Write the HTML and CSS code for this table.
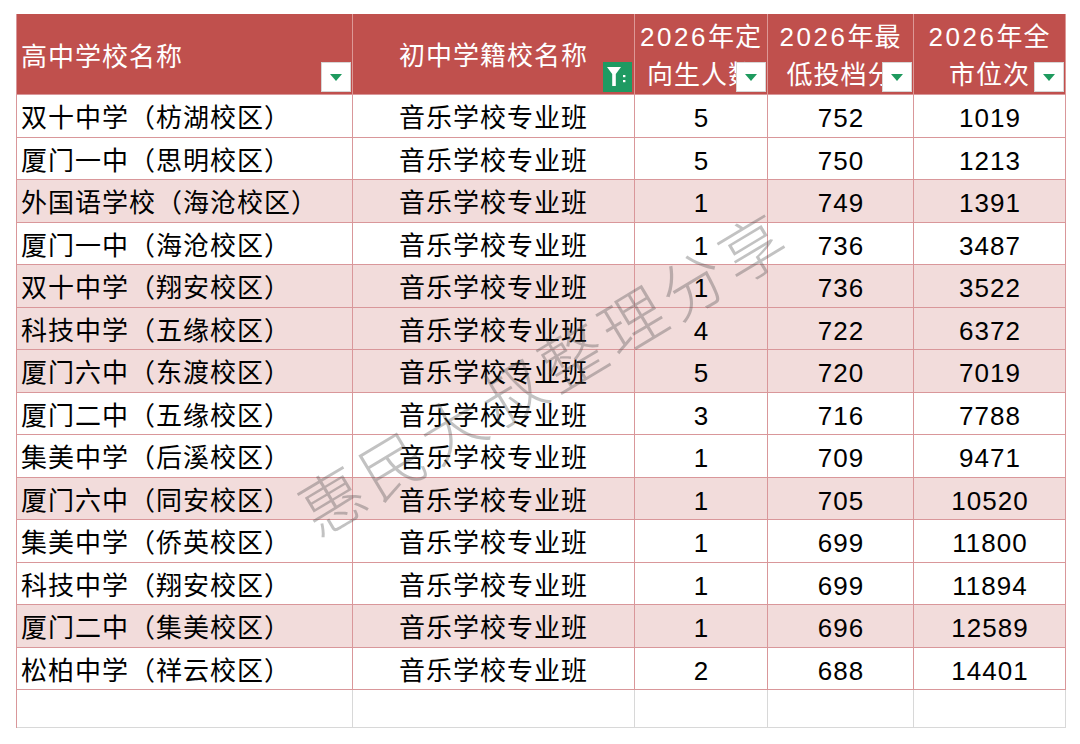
FILE: index.html
```html
<!DOCTYPE html>
<html lang="zh-CN">
<head>
<meta charset="utf-8">
<title>音乐学校专业班</title>
<link rel="stylesheet" href="styles.css">
</head>
<body>
<div class="page">
  <div class="sheet">
    <div class="hc left"><span>高中学校名称</span><i class="fbtn"><b></b></i></div>
    <div class="hc center"><span>初中学籍校名称</span>
      <svg class="factive" viewBox="0 0 29 30" width="29" height="30"><rect width="29" height="30" fill="#1e9a62"/><path d="M4 5 H18 L12.8 12 V24 H9.2 V12 Z" fill="#fff"/><rect x="20" y="13" width="2.4" height="2.2" fill="#fff"/><rect x="20" y="18" width="2.4" height="2.2" fill="#fff"/></svg>
    </div>
    <div class="hc two"><span><em>2026</em>年定<br>向生人数</span><i class="fbtn"><b></b></i></div>
    <div class="hc two"><span><em>2026</em>年最<br>低投档分</span><i class="fbtn"><b></b></i></div>
    <div class="hc two"><span><em>2026</em>年全<br>市位次</span><i class="fbtn"><b></b></i></div>

    <div class="c l">双十中学（枋湖校区）</div><div class="c m">音乐学校专业班</div><div class="c n">5</div><div class="c n">752</div><div class="c n">1019</div>
    <div class="c l">厦门一中（思明校区）</div><div class="c m">音乐学校专业班</div><div class="c n">5</div><div class="c n">750</div><div class="c n">1213</div>
    <div class="c l p">外国语学校（海沧校区）</div><div class="c m p">音乐学校专业班</div><div class="c n p">1</div><div class="c n p">749</div><div class="c n p">1391</div>
    <div class="c l">厦门一中（海沧校区）</div><div class="c m">音乐学校专业班</div><div class="c n">1</div><div class="c n">736</div><div class="c n">3487</div>
    <div class="c l p">双十中学（翔安校区）</div><div class="c m p">音乐学校专业班</div><div class="c n p">1</div><div class="c n p">736</div><div class="c n p">3522</div>
    <div class="c l p">科技中学（五缘校区）</div><div class="c m p">音乐学校专业班</div><div class="c n p">4</div><div class="c n p">722</div><div class="c n p">6372</div>
    <div class="c l p">厦门六中（东渡校区）</div><div class="c m p">音乐学校专业班</div><div class="c n p">5</div><div class="c n p">720</div><div class="c n p">7019</div>
    <div class="c l">厦门二中（五缘校区）</div><div class="c m">音乐学校专业班</div><div class="c n">3</div><div class="c n">716</div><div class="c n">7788</div>
    <div class="c l">集美中学（后溪校区）</div><div class="c m">音乐学校专业班</div><div class="c n">1</div><div class="c n">709</div><div class="c n">9471</div>
    <div class="c l p">厦门六中（同安校区）</div><div class="c m p">音乐学校专业班</div><div class="c n p">1</div><div class="c n p">705</div><div class="c n p">10520</div>
    <div class="c l">集美中学（侨英校区）</div><div class="c m">音乐学校专业班</div><div class="c n">1</div><div class="c n">699</div><div class="c n">11800</div>
    <div class="c l">科技中学（翔安校区）</div><div class="c m">音乐学校专业班</div><div class="c n">1</div><div class="c n">699</div><div class="c n">11894</div>
    <div class="c l p">厦门二中（集美校区）</div><div class="c m p">音乐学校专业班</div><div class="c n p">1</div><div class="c n p">696</div><div class="c n p">12589</div>
    <div class="c l">松柏中学（祥云校区）</div><div class="c m">音乐学校专业班</div><div class="c n">2</div><div class="c n">688</div><div class="c n">14401</div>

    <div class="e"></div><div class="e"></div><div class="e"></div><div class="e"></div><div class="e"></div>
  </div>
  <div class="watermark">惠民大叔整理分享</div>
</div>
</body>
</html>
```

FILE: styles.css
```css
html, body {
  margin: 0;
  padding: 0;
  background: #ffffff;
}

.page {
  position: relative;
  width: 1080px;
  height: 744px;
  overflow: hidden;
  padding: 14px 0 0 16px;
  box-sizing: border-box;
  font-family: "Liberation Sans", "Noto Sans CJK SC", sans-serif;
}

.sheet {
  display: grid;
  grid-template-columns: 336px 282px 133px 146px 152px;
  grid-template-rows: 81px repeat(14, 42.5px) 38px;
  width: 1049px;
  border-left: 1px solid #d9979a;
  box-sizing: border-box;
}

.hc {
  position: relative;
  background: #c0504d;
  color: #ffffff;
  font-size: 26px;
  letter-spacing: 1px;
  border-right: 1px solid #dd9896;
  border-bottom: 1px solid #d9979a;
  display: flex;
  align-items: center;
  box-sizing: border-box;
}

.hc em {
  font-style: normal;
  letter-spacing: 2.5px;
}

.hc.left {
  padding-left: 4px;
}

.hc.center {
  justify-content: center;
  padding-bottom: 2px;
}

.hc.two {
  justify-content: center;
  text-align: center;
  line-height: 38px;
  padding-top: 3px;
}

.hc:last-of-type {
  border-right-color: #d9979a;
}

.fbtn {
  position: absolute;
  right: 1px;
  bottom: 2px;
  width: 30px;
  height: 30px;
  box-sizing: border-box;
  background: #ffffff;
  border: 1px solid #d6d6d6;
  display: flex;
  align-items: center;
  justify-content: center;
}

.fbtn b {
  width: 0;
  height: 0;
  border-left: 6px solid transparent;
  border-right: 6px solid transparent;
  border-top: 7px solid #1e9a5e;
}

.factive {
  position: absolute;
  right: 2px;
  bottom: 2px;
  display: block;
}

.c {
  font-size: 26px;
  letter-spacing: 1px;
  color: #000000;
  background: #ffffff;
  border-right: 1px solid #d9979a;
  border-bottom: 1px solid #d9979a;
  display: flex;
  align-items: center;
  box-sizing: border-box;
  white-space: nowrap;
}

.c.l {
  padding-left: 4px;
}

.c.m {
  justify-content: center;
}

.c.n {
  justify-content: center;
  padding-top: 6px;
  padding-left: 1px;
}

.c.p {
  background: #f2dcdb;
}

.e {
  border-right: 1px solid #d8d8d8;
  border-bottom: 1px solid #d8d8d8;
  background: #ffffff;
}

.watermark {
  position: absolute;
  left: 543px;
  top: 370px;
  transform: translate(-50%, -50%) rotate(-31deg);
  font-family: "Noto Sans CJK SC", sans-serif;
  font-weight: 300;
  font-size: 64px;
  letter-spacing: 6px;
  color: rgba(70, 70, 70, 0.33);
  white-space: nowrap;
  pointer-events: none;
}
```
